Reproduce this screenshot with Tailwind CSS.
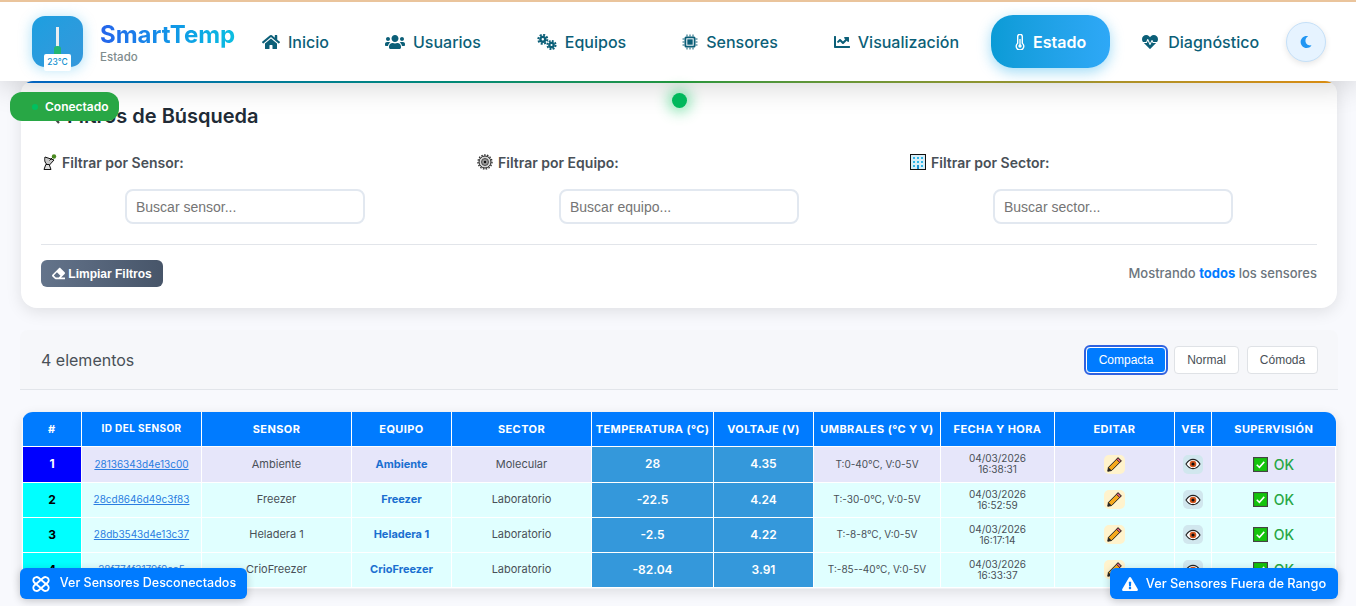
<!DOCTYPE html>
<html lang="es">
<head>
  <meta charset="UTF-8" />
  <title>SmartTemp - Estado</title>
  <script src="https://cdn.jsdelivr.net/npm/@tailwindcss/browser@4"></script>
</head>
<body class="h-screen overflow-hidden bg-[#f8f9fd] font-['Inter','Liberation_Sans',sans-serif] text-[#333]">
  <!-- iconos reutilizados en la tabla -->
  <svg class="hidden">
    <symbol id="pencil" viewBox="0 0 24 24">
      <path d="M17 2.500l4.500 4.500L8 20.500 2.500 21.500 3.500 16z" fill="#f5a81c" stroke="#222" stroke-width="1.400" stroke-linejoin="round"/>
      <path d="M17 2.500l4.500 4.500-2.200 2.200-4.500-4.500z" fill="#e8607a" stroke="#222" stroke-width="1.200"/>
      <path d="M3.500 16L2.500 21.500 8 20.500z" fill="#222"/>
    </symbol>
    <symbol id="eye" viewBox="0 0 24 24">
      <path d="M1.500 12C5 6.500 8.500 5 12 5s7 1.500 10.500 7C19 17.500 15.500 19 12 19S5 17.500 1.500 12z" fill="#fff" stroke="#222" stroke-width="1.700"/>
      <circle cx="12" cy="12" r="5" fill="#d4551c"/>
      <circle cx="12" cy="12" r="2.300" fill="#111"/>
    </symbol>
    <symbol id="check" viewBox="0 0 16 16">
      <rect x="0.600" y="0.600" width="14.800" height="14.800" fill="#14c40c" stroke="#444" stroke-width="1.200"/>
      <path d="M4 8.300l2.800 2.700L12 5.200" fill="none" stroke="#fff" stroke-width="1.600"/>
    </symbol>
  </svg>

  <header class="relative z-20 flex h-[81px] items-center border-t-2 border-[#eac49c] bg-white pl-[32px] shadow-[0_4px_30px_rgba(0,0,0,0.18)]">
    <div class="relative h-[51px] w-[51px] shrink-0 rounded-[13px] bg-gradient-to-br from-[#1c9fe0] to-[#3498db] shadow-[0_2px_14px_rgba(14,165,233,0.35)]">
      <div class="absolute left-[24px] top-[11px] h-[24px] w-[3px] bg-[#e8edf0]"></div>
      <div class="absolute left-[22px] top-[30px] h-[8px] w-[7px] rounded-t-[3px] bg-[#22b573]"></div>
      <div class="absolute left-[12px] top-[38px] flex h-[17px] w-[27px] items-center justify-center rounded-[2px] bg-white text-[8.500px] font-medium text-[#0e8fd0]">23°C</div>
    </div>
    <div class="ml-[17px] w-[138px] shrink-0">
      <div class="bg-gradient-to-r from-[#2563eb] to-[#0ec0e0] bg-clip-text text-[24px] font-bold leading-[29px] text-transparent">SmartTemp</div>
      <div class="mt-[1px] text-[11.500px] font-medium leading-[14px] text-[#7f8c8d]">Estado</div>
    </div>
    <nav class="flex items-center gap-2 text-[16px] font-medium text-[#0c5f78]">
      <a class="flex h-[53px] items-center gap-2 px-6">
        <svg class="h-[16px] w-[18px] fill-current" viewBox="0 0 576 512"><path d="M280.37 148.26L96 300.11V464a16 16 0 0 0 16 16l112.06-.29a16 16 0 0 0 15.92-16V368a16 16 0 0 1 16-16h64a16 16 0 0 1 16 16v95.64a16 16 0 0 0 16 16.05L464 480a16 16 0 0 0 16-16V300L295.67 148.26a12.19 12.19 0 0 0-15.3 0zM571.6 251.47L488 182.56V44.05a12 12 0 0 0-12-12h-56a12 12 0 0 0-12 12v72.61L318.47 43a48 48 0 0 0-61 0L4.34 251.47a12 12 0 0 0-1.6 16.9l25.5 31A12 12 0 0 0 45.15 301l235.22-193.74a12.19 12.19 0 0 1 15.3 0L530.9 301a12 12 0 0 0 16.9-1.6l25.5-31a12 12 0 0 0-1.7-16.93z"/></svg>
        Inicio
      </a>
      <a class="flex h-[53px] items-center gap-2 px-6">
        <svg class="h-[16px] w-[20px] fill-current" viewBox="0 0 640 512"><path d="M96 224c35.3 0 64-28.7 64-64s-28.7-64-64-64-64 28.7-64 64 28.7 64 64 64zm448 0c35.3 0 64-28.7 64-64s-28.7-64-64-64-64 28.7-64 64 28.700 64 64 64zm32 32h-64c-17.6 0-33.5 7.1-45.1 18.6 40.3 22.1 68.9 62 75.1 109.4h66c17.7 0 32-14.3 32-32v-32c0-35.3-28.7-64-64-64zm-256 0c61.9 0 112-50.1 112-112S381.900 32 320 32 208 82.100 208 144s50.100 112 112 112zm76.800 32h-8.300c-20.800 10-43.900 16-68.500 16s-47.600-6-68.500-16h-8.300C179.600 288 128 339.600 128 403.200V432c0 26.500 21.500 48 48 48h288c26.500 0 48-21.500 48-48v-28.800c0-63.600-51.600-115.200-115.200-115.200zm-223.700-13.400C161.500 263.100 145.600 256 128 256H64c-35.300 0-64 28.700-64 64v32c0 17.700 14.300 32 32 32h65.900c6.300-47.400 34.900-87.300 75.200-109.400z"/></svg>
        Usuarios
      </a>
      <a class="flex h-[53px] items-center gap-2 px-6">
        <svg class="h-[16px] w-[20px]" viewBox="0 0 20 16" fill="none" stroke="currentColor">
          <circle cx="5.800" cy="5.300" r="2.400" stroke-width="2.400"/><circle cx="5.800" cy="5.300" r="4.500" stroke-width="2" stroke-dasharray="2 1.500"/>
          <circle cx="14.500" cy="11" r="2.200" stroke-width="2.300"/><circle cx="14.500" cy="11" r="4.100" stroke-width="1.900" stroke-dasharray="1.900 1.300"/>
        </svg>
        Equipos
      </a>
      <a class="flex h-[53px] items-center gap-2 px-6">
        <svg class="h-[16px] w-[16px]" viewBox="0 0 16 16" fill="none">
          <rect x="2.500" y="2.500" width="11" height="11" rx="1.500" fill="currentColor"/>
          <rect x="4.300" y="4.300" width="7.400" height="7.400" fill="#fff"/>
          <rect x="5.300" y="5.300" width="5.400" height="5.400" fill="currentColor"/>
          <path d="M5 0.500v2M8 0.500v2M11 0.500v2M5 13.500v2M8 13.500v2M11 13.500v2M0.500 5h2M0.500 8h2M0.500 11h2M13.500 5h2M13.500 8h2M13.500 11h2" stroke="currentColor" stroke-width="1"/>
        </svg>
        Sensores
      </a>
      <a class="flex h-[53px] items-center gap-2 px-6">
        <svg class="h-[16px] w-[16px] fill-current" viewBox="0 0 512 512"><path d="M496 384H64V80c0-8.840-7.160-16-16-16H16C7.160 64 0 71.160 0 80v336c0 17.670 14.330 32 32 32h464c8.840 0 16-7.160 16-16v-32c0-8.840-7.160-16-16-16zM464 96H345.940c-21.380 0-32.090 25.850-16.970 40.970l32.400 32.400L288 242.750l-73.370-73.370c-12.500-12.500-32.760-12.500-45.250 0l-68.690 68.690c-6.250 6.250-6.250 16.380 0 22.630l22.620 22.620c6.250 6.250 16.380 6.250 22.630 0L192 237.250l73.370 73.370c12.500 12.500 32.760 12.500 45.250 0l96-96 32.400 32.400c15.120 15.120 40.970 4.410 40.970-16.970V112c.01-8.840-7.150-16-15.990-16z"/></svg>
        Visualización
      </a>
      <a class="flex h-[53px] items-center gap-2 rounded-[22px] bg-gradient-to-r from-[#0a9bd6] to-[#2ea8f7] px-6 font-semibold text-white shadow-[0_4px_14px_rgba(14,165,233,0.4)]">
        <svg class="h-[16px] w-[10px]" viewBox="0 0 10 16" fill="none"><path d="M2.700 9.200V2.600a2.300 2.300 0 0 1 4.600 0v6.600a3.800 3.800 0 1 1-4.600 0z" stroke="#fff" stroke-width="1.400"/><circle cx="5" cy="12" r="1.700" fill="#fff"/><path d="M5 5v6" stroke="#fff" stroke-width="1.300"/></svg>
        Estado
      </a>
      <a class="flex h-[53px] items-center gap-[10px] px-6">
        <svg class="h-[16px] w-[16px] fill-current" viewBox="0 0 512 512"><path d="M320.200 243.800l-49.700 99.400c-6 12.100-23.400 11.700-28.900-.6l-56.900-126.300-30 71.700H60.600l182.500 186.500c7.100 7.300 18.600 7.300 25.700 0L451.400 288H342.300l-22.100-44.200zM473.700 73.900l-2.400-2.500c-51.500-52.600-135.800-52.600-187.400 0L256 100l-27.900-28.500c-51.500-52.700-135.900-52.700-187.400 0l-2.400 2.400C-10.400 123.700-12.500 203 31 256h102.400l35.900-86.200c5.400-12.900 23.600-13.200 29.400-.4l58.200 129.300 49-97.900c5.900-11.800 22.700-11.800 28.600 0l27.600 55.200H481c43.500-53 41.400-132.300-7.300-182.100z"/></svg>
        Diagnóstico
      </a>
    </nav>
    <button class="ml-[3px] flex h-[40px] w-[40px] items-center justify-center rounded-full border border-[#c5e0f8] bg-[#e6f3ff] shadow-[0_2px_6px_rgba(0,0,0,0.1)]">
      <svg class="h-[12px] w-[12px] fill-[#2196f3]" viewBox="0 0 512 512"><path d="M283.211 512c78.962 0 151.079-35.925 198.857-94.792 7.068-8.708-.639-21.430-11.562-19.350-124.203 23.654-238.262-71.576-238.262-196.954 0-72.222 38.662-138.635 101.498-174.394 9.686-5.512 7.250-20.197-3.756-22.230A258.156 258.156 0 0 0 283.211 0c-141.309 0-256 114.511-256 256 0 141.309 114.511 256 256 256z"/></svg>
    </button>
  </header>

  <main class="pl-[20px] pr-[18px]">
    <section class="relative mx-[1px] h-[227px] overflow-hidden rounded-b-[16px] rounded-t-[12px] bg-white px-[20px] shadow-[0_4px_16px_rgba(0,0,0,0.1)]">
      <div class="absolute inset-x-0 top-0 h-[2px] bg-gradient-to-r from-[#0a6fd8] via-[#28a745] to-[#f39c12]"></div>
      <h2 class="flex items-center gap-[6px] pt-[23px] text-[20px] font-semibold leading-[24px] text-[#212b36]">
        <svg class="h-[20px] w-[20px]" viewBox="0 0 20 20" fill="none" stroke="#444" stroke-width="2.200"><circle cx="10" cy="8" r="5"/><path d="M13.500 12L18 17"/></svg>
        Filtros de Búsqueda
      </h2>
      <div class="mt-[24px] grid grid-cols-3 gap-[26px]">
        <div>
          <label class="flex h-[20px] items-center gap-[5px] text-[14px] font-semibold text-[#495057]">
            <svg class="ml-[2px] h-[16px] w-[14px]" viewBox="0 0 14 16"><path d="M2 3c-1 3.500 0 7 4 8.500L11 6z" fill="#c8c8c8" stroke="#111" stroke-width="1"/><path d="M1 15.500l1.800-5h3.400l1.800 5z" fill="#ddd" stroke="#111" stroke-width="1"/><path d="M6.500 6.500L10.500 2.500" stroke="#111" stroke-width="1"/><circle cx="11" cy="2.500" r="2.200" fill="#4a8a20"/></svg>
            Filtrar por Sensor:
          </label>
          <input type="text" placeholder="Buscar sensor..." class="mx-auto mt-[17px] block h-[35px] w-[240px] rounded-[8px] border-2 border-[#e2e8f0] bg-white px-[9px] font-['Liberation_Sans',sans-serif] text-[14px] placeholder:text-[#757575]" />
        </div>
        <div>
          <label class="flex h-[20px] items-center gap-[5px] text-[14px] font-semibold text-[#495057]">
            <svg class="ml-[2px] h-[16px] w-[16px]" viewBox="0 0 16 16" fill="none"><circle cx="8" cy="8" r="6" fill="#d8d8d8" stroke="#222" stroke-width="1"/><circle cx="8" cy="8" r="7" stroke="#333" stroke-width="1.400" stroke-dasharray="1.500 1.400"/><circle cx="8" cy="8" r="3.500" fill="#999" stroke="#333" stroke-width=".8"/><circle cx="8" cy="8" r="1.200" fill="#111"/></svg>
            Filtrar por Equipo:
          </label>
          <input type="text" placeholder="Buscar equipo..." class="mx-auto mt-[17px] block h-[35px] w-[240px] rounded-[8px] border-2 border-[#e2e8f0] bg-white px-[9px] font-['Liberation_Sans',sans-serif] text-[14px] placeholder:text-[#757575]" />
        </div>
        <div>
          <label class="flex h-[20px] items-center gap-[5px] text-[14px] font-semibold text-[#495057]">
            <svg class="ml-[1px] h-[16px] w-[16px]" viewBox="0 0 16 16"><rect x=".500" y=".500" width="15" height="15" fill="#d8eef8" stroke="#111"/><path d="M3 3h2v2H3zM7 3h2v2H7zM11 3h2v2h-2zM3 7h2v2H3zM7 7h2v2H7zM11 7h2v2h-2zM3 11h2v2H3zM11 11h2v2h-2z" fill="#2fb6e8"/><rect x="7" y="11" width="2" height="4" fill="#1a8fd0"/></svg>
            Filtrar por Sector:
          </label>
          <input type="text" placeholder="Buscar sector..." class="mx-auto mt-[17px] block h-[35px] w-[240px] rounded-[8px] border-2 border-[#e2e8f0] bg-white px-[9px] font-['Liberation_Sans',sans-serif] text-[14px] placeholder:text-[#757575]" />
        </div>
      </div>
      <div class="mt-[20px] flex items-center justify-between border-t border-[#e2e5ea] pt-[15px]">
        <button class="flex h-[27px] w-[122px] items-center justify-center gap-[3px] rounded-[6px] bg-gradient-to-r from-[#64748b] to-[#475569] font-['Liberation_Sans',sans-serif] text-[12px] font-bold text-white">
          <svg class="h-[13px] w-[13px] fill-white" viewBox="0 0 512 512"><path d="M497.941 273.941c18.745-18.745 18.745-49.137 0-67.882l-160-160c-18.745-18.745-49.137-18.745-67.882 0l-256 256c-18.745 18.745-18.745 49.137 0 67.882l96 96A48.004 48.004 0 0 0 144 480h356c6.627 0 12-5.373 12-12v-40c0-6.627-5.373-12-12-12H355.883l142.058-142.059zm-302.627-62.627l137.373 137.373L265.373 416H150.628l-80-80 124.686-124.686z"/></svg>
          Limpiar Filtros
        </button>
        <p class="text-[13px] font-medium text-[#6c757d]">Mostrando <b class="font-bold text-[#007bff]">todos</b> los sensores</p>
      </div>
    </section>

    <div class="mt-[22px] flex h-[60px] items-center justify-between rounded-t-[8px] border-b border-[#e2e5ea] bg-[#f6f7fa] pl-[21px] pr-[20px]">
      <span class="text-[16px] text-[#495057]">4 elementos</span>
      <div class="flex items-center gap-[8px] font-['Liberation_Sans',sans-serif] text-[12px]">
        <button class="h-[26px] w-[80px] rounded-[4px] border border-white bg-[#007bff] font-medium text-white outline-2 outline-offset-0 outline-[#2f62e0]">Compacta</button>
        <button class="h-[28px] w-[65px] rounded-[4px] border border-[#dfe2e6] bg-white text-[#495057]">Normal</button>
        <button class="h-[28px] w-[71px] rounded-[4px] border border-[#dfe2e6] bg-white text-[#495057]">Cómoda</button>
      </div>
    </div>

    <div class="mx-[1px] mt-[21px] overflow-hidden rounded-[12px] border border-[#f0f1f4] shadow-[0_4px_12px_rgba(0,0,0,0.1)]">
      <table class="w-full table-fixed border-collapse text-center text-[11px] text-[#495057]">
        <colgroup>
          <col class="w-[59px]" /><col class="w-[120px]" /><col class="w-[150px]" /><col class="w-[100px]" />
          <col class="w-[140px]" /><col class="w-[122px]" /><col class="w-[100px]" /><col class="w-[127px]" />
          <col class="w-[114px]" /><col class="w-[120px]" /><col class="w-[37px]" /><col />
        </colgroup>
        <thead class="bg-[#007bff] text-[11px] font-bold uppercase tracking-[0.4px] text-white">
          <tr class="h-[34px]">
            <th class="border-r border-white">#</th><th class="border-r border-white text-[10px]">ID del Sensor</th><th class="border-r border-white">Sensor</th><th class="border-r border-white">Equipo</th><th class="border-r border-white">Sector</th><th class="border-r border-white">Temperatura (°C)</th><th class="border-r border-white">Voltaje (V)</th><th class="border-r border-white">Umbrales (°C y V)</th><th class="border-r border-white">Fecha y Hora</th><th class="border-r border-white">Editar</th><th class="border-r border-white">Ver</th><th>Supervisión</th>
          </tr>
        </thead>
        <tbody>
          <tr class="h-[36px] bg-[#e6e6fa]">
            <td class="border border-white bg-[#0000ff] text-[12px] font-bold text-white">1</td>
            <td class="border border-white text-[10px] text-[#2a7de1] underline">28136343d4e13c00</td>
            <td class="border border-white">Ambiente</td>
            <td class="border border-white font-bold text-[#1a6fd0]">Ambiente</td>
            <td class="border border-white">Molecular</td>
            <td class="border border-white bg-[#3498db] text-[12px] font-semibold text-white">28</td>
            <td class="border border-white bg-[#3498db] text-[12px] font-semibold text-white">4.35</td>
            <td class="border border-white text-[10px]">T:0-40°C, V:0-5V</td>
            <td class="border border-white text-[10px] leading-[11px]">04/03/2026<br />16:38:31</td>
            <td class="border border-white"><span class="mx-auto flex h-[19px] w-[21px] items-center justify-center rounded-[5px] bg-[#fff3cd]"><svg class="h-[17px] w-[17px]"><use href="#pencil" /></svg></span></td>
            <td class="border border-white"><span class="mx-auto flex h-[19px] w-[20px] items-center justify-center rounded-[5px] bg-[#d1e7ee]"><svg class="h-[16px] w-[16px]"><use href="#eye" /></svg></span></td>
            <td class="border border-white"><span class="flex items-center justify-center gap-[6px] text-[14px] font-medium text-[#28a745]"><svg class="h-[15px] w-[15px]"><use href="#check" /></svg>OK</span></td>
          </tr>
          <tr class="h-[35px] bg-[#e0ffff]">
            <td class="border border-white bg-[#00ffff] text-[12px] font-bold text-black">2</td>
            <td class="border border-white text-[10px] text-[#2a7de1] underline">28cd8646d49c3f83</td>
            <td class="border border-white">Freezer</td>
            <td class="border border-white font-bold text-[#1a6fd0]">Freezer</td>
            <td class="border border-white">Laboratorio</td>
            <td class="border border-white bg-[#3498db] text-[12px] font-semibold text-white">-22.5</td>
            <td class="border border-white bg-[#3498db] text-[12px] font-semibold text-white">4.24</td>
            <td class="border border-white text-[10px]">T:-30-0°C, V:0-5V</td>
            <td class="border border-white text-[10px] leading-[11px]">04/03/2026<br />16:52:59</td>
            <td class="border border-white"><span class="mx-auto flex h-[19px] w-[21px] items-center justify-center rounded-[5px] bg-[#fff3cd]"><svg class="h-[17px] w-[17px]"><use href="#pencil" /></svg></span></td>
            <td class="border border-white"><span class="mx-auto flex h-[19px] w-[20px] items-center justify-center rounded-[5px] bg-[#d1e7ee]"><svg class="h-[16px] w-[16px]"><use href="#eye" /></svg></span></td>
            <td class="border border-white"><span class="flex items-center justify-center gap-[6px] text-[14px] font-medium text-[#28a745]"><svg class="h-[15px] w-[15px]"><use href="#check" /></svg>OK</span></td>
          </tr>
          <tr class="h-[35px] bg-[#e0ffff]">
            <td class="border border-white bg-[#00ffff] text-[12px] font-bold text-black">3</td>
            <td class="border border-white text-[10px] text-[#2a7de1] underline">28db3543d4e13c37</td>
            <td class="border border-white">Heladera 1</td>
            <td class="border border-white font-bold text-[#1a6fd0]">Heladera 1</td>
            <td class="border border-white">Laboratorio</td>
            <td class="border border-white bg-[#3498db] text-[12px] font-semibold text-white">-2.5</td>
            <td class="border border-white bg-[#3498db] text-[12px] font-semibold text-white">4.22</td>
            <td class="border border-white text-[10px]">T:-8-8°C, V:0-5V</td>
            <td class="border border-white text-[10px] leading-[11px]">04/03/2026<br />16:17:14</td>
            <td class="border border-white"><span class="mx-auto flex h-[19px] w-[21px] items-center justify-center rounded-[5px] bg-[#fff3cd]"><svg class="h-[17px] w-[17px]"><use href="#pencil" /></svg></span></td>
            <td class="border border-white"><span class="mx-auto flex h-[19px] w-[20px] items-center justify-center rounded-[5px] bg-[#d1e7ee]"><svg class="h-[16px] w-[16px]"><use href="#eye" /></svg></span></td>
            <td class="border border-white"><span class="flex items-center justify-center gap-[6px] text-[14px] font-medium text-[#28a745]"><svg class="h-[15px] w-[15px]"><use href="#check" /></svg>OK</span></td>
          </tr>
          <tr class="h-[35px] bg-[#e0ffff]">
            <td class="border border-white bg-[#00ffff] text-[12px] font-bold text-black">4</td>
            <td class="border border-white text-[10px] text-[#2a7de1] underline">28f774f3179f0ca5</td>
            <td class="border border-white">CrioFreezer</td>
            <td class="border border-white font-bold text-[#1a6fd0]">CrioFreezer</td>
            <td class="border border-white">Laboratorio</td>
            <td class="border border-white bg-[#3498db] text-[12px] font-semibold text-white">-82.04</td>
            <td class="border border-white bg-[#3498db] text-[12px] font-semibold text-white">3.91</td>
            <td class="border border-white text-[10px]">T:-85--40°C, V:0-5V</td>
            <td class="border border-white text-[10px] leading-[11px]">04/03/2026<br />16:33:37</td>
            <td class="border border-white"><span class="mx-auto flex h-[19px] w-[21px] items-center justify-center rounded-[5px] bg-[#fff3cd]"><svg class="h-[17px] w-[17px]"><use href="#pencil" /></svg></span></td>
            <td class="border border-white"><span class="mx-auto flex h-[19px] w-[20px] items-center justify-center rounded-[5px] bg-[#d1e7ee]"><svg class="h-[16px] w-[16px]"><use href="#eye" /></svg></span></td>
            <td class="border border-white"><span class="flex items-center justify-center gap-[6px] text-[14px] font-medium text-[#28a745]"><svg class="h-[15px] w-[15px]"><use href="#check" /></svg>OK</span></td>
          </tr>
        </tbody>
      </table>
    </div>
  </main>

  <!-- elementos flotantes -->
  <div class="fixed left-[10px] top-[92px] z-30 flex h-[29px] w-[109px] items-center rounded-[12px] bg-[#28a745] pb-[-1px] pl-[22px] pt-[1px] text-[12px] font-semibold text-white">
    <span class="mr-[7px] h-[6px] w-[6px] rounded-full bg-[#00c060]"></span>Conectado
  </div>
  <div class="fixed left-[672px] top-[93px] z-30 h-[15px] w-[15px] rounded-full bg-[#00b85c] shadow-[0_0_14px_4px_rgba(0,200,90,0.45)]"></div>
  <button class="fixed bottom-[7px] left-[20px] z-30 flex h-[31px] w-[227px] items-center justify-center gap-[9px] rounded-[6px] bg-[#007bff] text-[12.500px] font-medium text-white shadow-[0_2px_8px_rgba(0,0,0,0.2)]">
    <svg class="h-[16px] w-[20px]" viewBox="0 0 20 16" fill="none" stroke="#fff" stroke-width="1.900"><rect x="1" y="4.800" width="18" height="6.400" rx="3.200" transform="rotate(40 10 8)"/><rect x="1" y="4.800" width="18" height="6.400" rx="3.200" transform="rotate(-40 10 8)"/></svg>
    Ver Sensores Desconectados
  </button>
  <button class="fixed bottom-[7px] right-[18px] z-30 flex h-[31px] w-[228px] items-center justify-center gap-[8px] rounded-[6px] bg-[#007bff] text-[12.800px] font-medium text-white shadow-[0_2px_8px_rgba(0,0,0,0.2)]">
    <svg class="h-[14px] w-[16px] fill-white" viewBox="0 0 576 512"><path d="M569.517 440.013C587.975 472.007 564.806 512 527.940 512H48.054c-36.937 0-59.999-40.055-41.577-71.987L246.423 24.035c18.467-32.009 64.720-31.951 83.154 0l239.940 416.978zM288 354c-25.405 0-46 20.595-46 46s20.595 46 46 46 46-20.595 46-46-20.595-46-46-46zm-43.673-165.346l7.418 136c.347 6.364 5.609 11.346 11.982 11.346h48.546c6.373 0 11.635-4.982 11.982-11.346l7.418-136c.375-6.874-5.098-12.654-11.982-12.654h-63.383c-6.884 0-12.356 5.780-11.981 12.654z"/></svg>
    Ver Sensores Fuera de Rango
  </button>
</body>
</html>
